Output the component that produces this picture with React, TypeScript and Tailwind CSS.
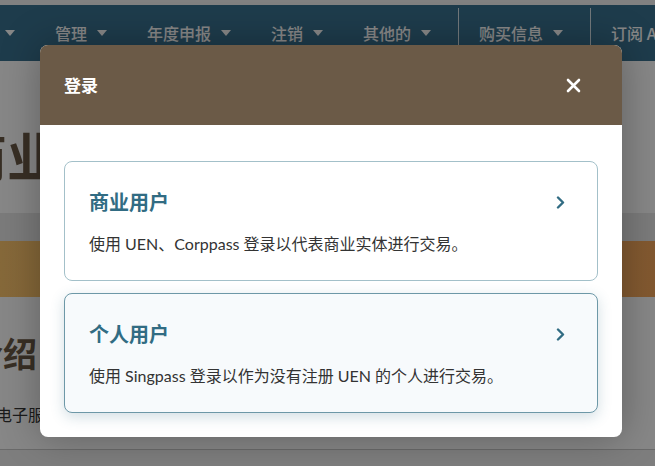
import { ReactNode } from 'react'

type NavItem = { label: string; sepBefore?: boolean }

const navItems: NavItem[] = [
  { label: '账户' },
  { label: '管理' },
  { label: '年度申报' },
  { label: '注销' },
  { label: '其他的' },
  { label: '购买信息', sepBefore: true },
  { label: '订阅 API', sepBefore: true },
]

function Caret() {
  return (
    <svg width="10" height="6" viewBox="0 0 10 6" className="ml-2.5 shrink-0">
      <polygon points="0,0 10,0 5,6" fill="currentColor" />
    </svg>
  )
}

function Chevron() {
  return (
    <svg width="9" height="13" viewBox="0 0 9 13" className="mt-[10px] mr-[8px] shrink-0">
      <polyline points="2,1.5 7,6.5 2,11.5" fill="none" stroke="#316c83" strokeWidth="2.4" strokeLinecap="round" strokeLinejoin="round" />
    </svg>
  )
}

function LoginCard({ title, desc, active }: { title: string; desc: ReactNode; active?: boolean }) {
  return (
    <div
      className={
        active
          ? 'flex justify-between rounded-lg border border-[#6d98a7] bg-[#f7fafc] px-6 py-6 shadow-[0_4px_14px_rgba(49,106,128,0.22)]'
          : 'flex justify-between rounded-lg border border-[#a3c0c9] bg-white px-6 py-6'
      }
    >
      <div>
        <h3 className="text-[20px] font-bold leading-8 text-[#316c83]">{title}</h3>
        <p className="mt-3.5 text-[16px] leading-6 text-[#333]">{desc}</p>
      </div>
      <Chevron />
    </div>
  )
}

export default function App() {
  return (
    <div className="relative h-[466px] w-[655px] overflow-hidden bg-white font-['Lato','Noto_Sans_CJK_SC',sans-serif]">
      {/* page underneath */}
      <div className="h-[5px] bg-[#f4f4f4]" />
      <nav className="flex h-[56px] items-center bg-[#3a7290] font-['Noto_Sans_CJK_SC',sans-serif] text-[16px] font-medium text-white">
        <div className="-ml-[57px] flex items-center">
          {navItems.map((n) => (
            <div key={n.label} className="flex items-center">
              {n.sepBefore && <div className="ml-[7px] h-[50px] w-px self-end bg-white/80" />}
              <div className="flex items-center px-5 whitespace-nowrap">
                <span>{n.label}</span>
                {n.label !== '订阅 API' && <Caret />}
              </div>
            </div>
          ))}
        </div>
      </nav>
      <main className="font-['Noto_Sans_CJK_SC',sans-serif]">
        <div className="h-[152px] pt-[68px]">
          <h1 className="-ml-[45px] whitespace-nowrap text-[52px] font-bold leading-none text-[#6b5a47]">商业实体</h1>
        </div>
        <div className="h-[28px] bg-[#e8e8e8]" />
        <div className="h-[56px] bg-gradient-to-r from-[#fdc66e] to-[#f7a95c]" />
        <div className="h-[153px] border-b border-[#c8c8c8] pt-[39px]">
          <h2 className="-ml-[31px] whitespace-nowrap text-[34px] font-bold leading-none text-[#6b5a47]">介绍</h2>
          <p className="-ml-[4px] mt-[36px] whitespace-nowrap text-[16px] leading-none text-[#333]">电子服务</p>
        </div>
        <div className="h-[20px] bg-[#efefef]" />
      </main>

      {/* backdrop */}
      <div className="absolute inset-0 bg-black/[0.47]" />

      {/* modal */}
      <div className="absolute left-[40px] top-[45px] w-[582px] overflow-hidden rounded-lg bg-white shadow-[0_0_40px_rgba(0,0,0,0.3)]">
        <div className="flex h-[80px] items-center justify-between bg-[#6b5a47] pl-6 pr-[41px]">
          <h2 className="font-['Noto_Sans_CJK_SC',sans-serif] text-[17px] font-bold text-white">登录</h2>
          <svg width="15" height="15" viewBox="0 0 15 15">
            <path d="M2 2 L13 13 M13 2 L2 13" stroke="white" strokeWidth="2.6" strokeLinecap="round" />
          </svg>
        </div>
        <div className="flex flex-col gap-3 px-6 pb-6 pt-9">
          <LoginCard title="商业用户" desc="使用 UEN、Corppass 登录以代表商业实体进行交易。" />
          <LoginCard title="个人用户" desc="使用 Singpass 登录以作为没有注册 UEN 的个人进行交易。" active />
        </div>
      </div>
    </div>
  )
}
